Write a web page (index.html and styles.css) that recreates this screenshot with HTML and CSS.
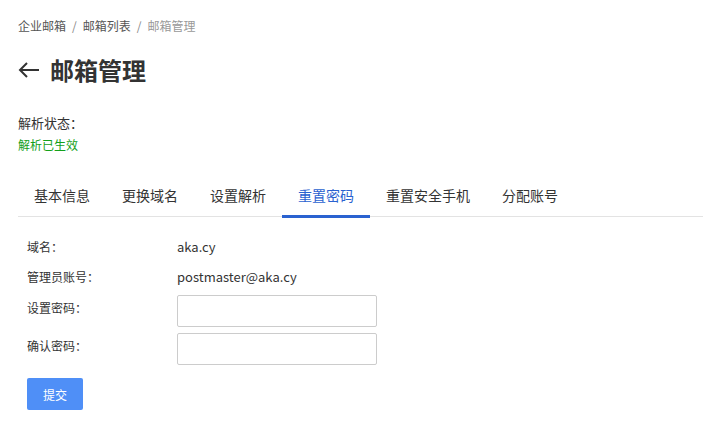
FILE: index.html
```html
<!DOCTYPE html>
<html lang="zh-CN">
<head>
  <meta charset="UTF-8">
  <title>邮箱管理</title>
  <link rel="stylesheet" href="styles.css">
</head>
<body>

  <div class="page">
    <div class="breadcrumb">
      <a href="#">企业邮箱</a>
      <span class="sep">/</span>
      <a href="#">邮箱列表</a>
      <span class="sep">/</span>
      <span class="current">邮箱管理</span>
    </div>

    <div class="title">
      <svg class="back" width="22" height="16" viewBox="0 0 22 16">
        <path d="M21 8H2M9 1L2 8l7 7" fill="none" stroke="#333" stroke-width="2"/>
      </svg>
      <h1>邮箱管理</h1>
    </div>

    <div class="status">
      <div class="status-label">解析状态：</div>
      <div class="status-value">解析已生效</div>
    </div>

    <div class="tabs">
      <div class="tab">基本信息</div>
      <div class="tab">更换域名</div>
      <div class="tab">设置解析</div>
      <div class="tab active">重置密码</div>
      <div class="tab">重置安全手机</div>
      <div class="tab">分配账号</div>
    </div>

    <form class="form">
      <div class="form-row">
        <label>域名：</label>
        <span class="value">aka.cy</span>
      </div>
      <div class="form-row">
        <label>管理员账号：</label>
        <span class="value">postmaster@aka.cy</span>
      </div>
      <div class="form-row input-row first-input">
        <label>设置密码：</label>
        <input type="password">
      </div>
      <div class="form-row input-row">
        <label>确认密码：</label>
        <input type="password">
      </div>
      <button type="button" class="submit-btn">提交</button>
    </form>
  </div>

</body>
</html>
```

FILE: styles.css
```css
body {
  margin: 0;
  padding: 0;
  background: #fff;
  font-family: "Noto Sans CJK SC", "Noto Sans", sans-serif;
  color: #333;
}

.page {
  padding: 16px 0 0 18px;
}

.breadcrumb {
  font-size: 12px;
  line-height: 20px;
  color: #666;
  display: flex;
  gap: 6px;
}

.breadcrumb a {
  color: #555;
  text-decoration: none;
}

.breadcrumb .sep {
  color: #888;
}

.breadcrumb .current {
  color: #999;
}

.title {
  display: flex;
  align-items: center;
  margin-top: 17px;
}

.title .back {
  margin-right: 10px;
}

.title h1 {
  margin: 0;
  font-size: 24px;
  line-height: 34px;
  font-weight: bold;
  color: #333;
}

.status {
  margin-top: 26px;
}

.status-label {
  font-size: 13px;
  line-height: 20px;
  color: #333;
}

.status-value {
  font-size: 12px;
  line-height: 20px;
  color: #14a01a;
  margin-top: 2px;
}

.tabs {
  display: flex;
  margin-top: 20px;
  border-bottom: 1px solid #e3e3e3;
}

.tab {
  padding: 0 16px;
  font-size: 14px;
  line-height: 40px;
  color: #333;
  border-bottom: 3px solid transparent;
  margin-bottom: -2px;
}

.tab.active {
  color: #2a62d0;
  border-bottom-color: #2a62d0;
}

.form {
  padding: 14px 0 0 9px;
}

.form-row {
  display: flex;
  align-items: center;
  height: 30px;
  font-size: 12px;
}

.form-row label {
  width: 150px;
  color: #333;
}

.form-row .value {
  font-size: 13px;
  color: #333;
}

.input-row {
  height: 32px;
  margin-bottom: 6px;
  align-items: flex-start;
}

.first-input {
  margin-top: 4px;
}

.input-row label {
  line-height: 26px;
}

.input-row input {
  width: 200px;
  height: 32px;
  box-sizing: border-box;
  border: 1px solid #ccc;
  border-radius: 2px;
  padding: 0 8px;
  margin: 0;
}

.submit-btn {
  margin-top: 7px;
  width: 56px;
  height: 32px;
  border: none;
  border-radius: 2px;
  background: #4f8ff7;
  color: #fff;
  font-size: 12px;
  font-family: inherit;
  cursor: pointer;
}
```
